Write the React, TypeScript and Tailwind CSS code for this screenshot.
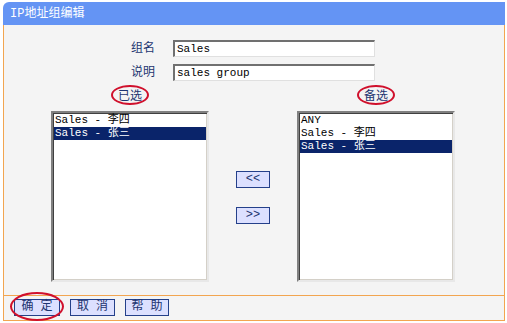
import React from "react";

const cjk = "font-['SimSun','Liberation_Mono','Noto_Sans_CJK_SC',monospace]";

const ListBox = ({ items, selected }: { items: string[]; selected: number }) => {
    return (
        <div className="w-[158px] h-[171px] bg-white border-2 border-t-[#808080] border-l-[#808080] border-r-[#e8e8e8] border-b-[#e8e8e8] shadow-[inset_1px_1px_0_#404040,inset_-1px_-1px_0_#d4d0c8] p-[1px]">
            {items.map((it, i) => (
                <div key={it}
                    className={`h-[13px] leading-[13px] pl-[1px] text-[11px] whitespace-nowrap ${i === selected ? "bg-[#0a246a] text-white" : "text-black"}`}>
                    {it}
                </div>
            ))}
        </div>
    );
};

const Field = ({ label, value }: { label: string; value: string }) => {
    return (
        <div className="flex items-center h-[17px]">
            <div className="w-[151px] text-right text-[12px] text-[#1c3470]">{label}</div>
            <div className="ml-[18px] w-[202px] h-[17px] bg-white border-t-2 border-l-2 border-t-[#707070] border-l-[#707070] border-r border-b border-r-[#e0e0e0] border-b-[#e0e0e0] pl-[2px] text-[11px] leading-[14px] text-black">
                {value}
            </div>
        </div>
    );
};

const Btn = ({ children, w }: { children: React.ReactNode; w: string }) => (
    <button className={`${w} h-[17px] bg-[#dce0ff] border border-[#24408a] text-[12px] leading-[15px] text-[#1c3470] flex items-center justify-center`}>
        {children}
    </button>
);

const Circled = ({ children }: { children: React.ReactNode }) => (
    <span className="relative inline-block h-[20px] text-[12px] text-[#1c3470]">
        <span className="relative top-[3px]">{children}</span>
        <span className="absolute -left-[7px] -right-[7px] top-0 bottom-0 border-2 border-[#d0102c] rounded-[50%]" />
    </span>
);

export default function App() {
    return (
        <div className={`w-[507px] h-[323px] bg-white pt-[2px] pl-[3px] ${cjk}`}>
            <div className="w-[502px]">
                <div className="h-[23px] bg-[#6494f4] rounded-tl-[6px] flex items-center pl-[7px] text-[12px] text-white">
                    IP地址组编辑
                </div>

                <div className="h-[270px] bg-[#f4f4f4] border-x border-[#f2a550] pt-[15px]">
                    <div className="flex flex-col gap-[7px]">
                        <Field label="组名" value="Sales" />
                        <Field label="说明" value="sales group" />
                    </div>

                    <div className="flex mt-[4px] h-[20px] pl-[47px]">
                        <div className="w-[158px] flex justify-center"><Circled>已选</Circled></div>
                        <div className="w-[88px]" />
                        <div className="w-[158px] flex justify-center"><Circled>备选</Circled></div>
                    </div>

                    <div className="flex mt-[6px] pl-[47px]">
                        <ListBox items={["Sales - 李四", "Sales - 张三"]} selected={1} />
                        <div className="w-[88px] flex flex-col items-center pt-[60px] gap-[19px]">
                            <Btn w="w-[34px]">&lt;&lt;</Btn>
                            <Btn w="w-[34px]">&gt;&gt;</Btn>
                        </div>
                        <ListBox items={["ANY", "Sales - 李四", "Sales - 张三"]} selected={2} />
                    </div>
                </div>

                <div className="h-[26px] bg-[#f4f4f4] border border-[#f2a550] flex items-start pt-[3px] pl-[10px] gap-[10px]">
                    <div className="relative">
                        <Btn w="w-[46px]">确 定</Btn>
                        <span className="absolute -left-[4px] -right-[4px] -top-[7px] -bottom-[5px] border-2 border-[#d0102c] rounded-[50%]" />
                    </div>
                    <Btn w="w-[45px]">取 消</Btn>
                    <Btn w="w-[44px]">帮 助</Btn>
                </div>
            </div>
        </div>
    );
}
